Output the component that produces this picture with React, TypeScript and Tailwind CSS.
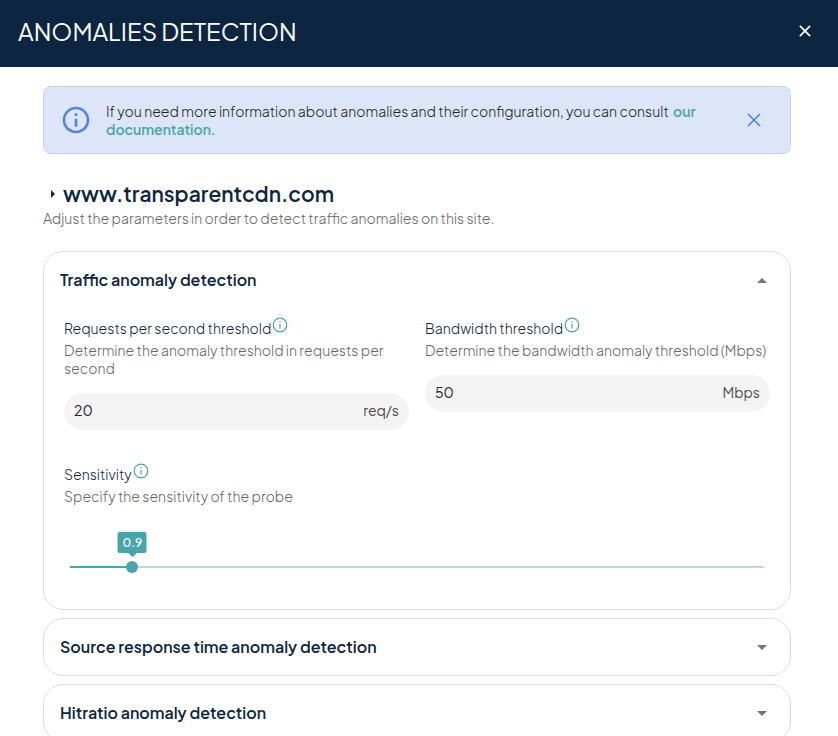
import { useId, useState } from "react";
import type { ReactNode } from "react";

function InfoIcon({ className }: { className: string }) {
  return (
    <svg viewBox="0 0 24 24" className={className} fill="currentColor" aria-hidden="true">
      <path d="M11 7h2v2h-2zm0 4h2v6h-2zm1-9C6.48 2 2 6.48 2 12s4.48 10 10 10 10-4.48 10-10S17.52 2 12 2m0 18c-4.41 0-8-3.59-8-8s3.59-8 8-8 8 3.59 8 8-3.59 8-8 8" />
    </svg>
  );
}

function ThinInfoIcon() {
  return (
    <svg viewBox="0 0 16 16" className="mb-1 ml-px size-4 shrink-0 text-[#4aa5aa]" fill="none" stroke="currentColor" aria-hidden="true">
      <circle cx="8" cy="8" r="6.8" strokeWidth="1.2" />
      <path d="M8 7v4.5M8 4.3v1.3" strokeWidth="1.2" />
    </svg>
  );
}

function CloseIcon({ className }: { className: string }) {
  return (
    <svg viewBox="0 0 14 14" className={className} fill="none" stroke="currentColor" aria-hidden="true">
      <path d="M1 1l12 12M13 1L1 13" />
    </svg>
  );
}

function FieldLabel({ id, label, hint }: { id: string; label: string; hint: string }) {
  return (
    <>
      <label htmlFor={id} className="flex h-6 items-end text-sm leading-[18px] font-light text-[#0c2541]">
        {label}
        <ThinInfoIcon />
      </label>
      <p className="mt-1 text-sm leading-[18px] font-light text-[#666]">{hint}</p>
    </>
  );
}

function ThresholdField({ label, hint, unit, initial }: { label: string; hint: string; unit: string; initial: string }) {
  const id = useId();
  const [value, setValue] = useState(initial);
  return (
    <div>
      <FieldLabel id={id} label={label} hint={hint} />
      <div className="mt-4 flex h-[37px] items-center rounded-full bg-[#f4f4f4] px-2.5 pb-1 text-sm">
        <input
          id={id}
          value={value}
          onChange={(e) => setValue(e.target.value)}
          className="min-w-0 flex-1 bg-transparent text-[#222] outline-none"
        />
        <span className="text-[#4c4c4c]">{unit}</span>
      </div>
    </div>
  );
}

function SensitivitySlider() {
  const id = useId();
  const [value, setValue] = useState(0.9);
  const percent = `${value * 10}%`;
  return (
    <div className="mt-[29px]">
      <FieldLabel id={id} label="Sensitivity" hint="Specify the sensitivity of the probe" />
      <div className="relative mt-14 flex h-3 items-center px-1.5">
        <div className="relative h-0.5 w-full bg-[#b7dadc]">
          <div className="h-full bg-[#4aa5aa]" style={{ width: percent }} />
          <output
            htmlFor={id}
            style={{ left: percent }}
            className="absolute bottom-[15px] flex h-[21px] w-[29px] -translate-x-1/2 items-center justify-center rounded-xs bg-[#4aa5aa] text-xs font-medium text-white after:absolute after:-bottom-[3px] after:size-1.5 after:rotate-45 after:bg-[#4aa5aa]"
          >
            <span className="relative z-10">{value}</span>
          </output>
        </div>
        <input
          id={id}
          type="range"
          min={0}
          max={10}
          step={0.1}
          value={value}
          onChange={(e) => setValue(Number(e.target.value))}
          className="absolute inset-0 h-3 w-full cursor-pointer appearance-none bg-transparent [&::-webkit-slider-thumb]:size-3 [&::-webkit-slider-thumb]:appearance-none [&::-webkit-slider-thumb]:rounded-full [&::-webkit-slider-thumb]:bg-[#4aa5aa]"
        />
      </div>
    </div>
  );
}

function Panel({ title, initiallyOpen = false, children }: { title: string; initiallyOpen?: boolean; children?: ReactNode }) {
  const [open, setOpen] = useState(initiallyOpen);
  return (
    <section className="rounded-[20px] border border-[#dedede]">
      <h3>
        <button
          type="button"
          aria-expanded={open}
          onClick={() => setOpen(!open)}
          className="flex h-14 w-full items-center justify-between px-4 text-left text-base font-semibold text-[#0c2541]"
        >
          {title}
          <svg viewBox="0 0 10 5" className="mr-[7px] h-[5px] w-2.5 text-[#757575]" fill="currentColor" aria-hidden="true">
            <path d={open ? "M0 5L5 0l5 5z" : "M0 0h10L5 5z"} />
          </svg>
        </button>
      </h3>
      {open && children}
    </section>
  );
}

export default function App() {
  const [notice, setNotice] = useState(true);
  return (
    <div className="h-screen overflow-hidden bg-white font-['Plus_Jakarta_Sans','Inter',sans-serif]">
      <header className="flex h-[67px] items-center justify-between bg-[#0c2541] pr-[27px] pb-1.5 pl-[18px] text-white">
        <h1 className="text-2xl font-normal">ANOMALIES DETECTION</h1>
        <button type="button" aria-label="Close">
          <CloseIcon className="size-3 stroke-2" />
        </button>
      </header>
      <main className="pt-[19px] pr-[47px] pl-[43px]">
        {notice && (
          <div role="status" className="flex h-[68px] items-center rounded-lg border border-[#bfd3f4] bg-[#dce6f8] pr-[29px] pl-4">
            <InfoIcon className="size-8 shrink-0 text-[#5384e4]" />
            <p className="mr-12 ml-3.5 flex-1 text-sm leading-[18px] font-light text-[#222]">
              If you need more information about anomalies and their configuration, you can consult{" "}
              <a href="#documentation" className="ml-0.5 font-semibold text-[#4fa3a8]">
                our documentation.
              </a>
            </p>
            <button type="button" aria-label="Dismiss" onClick={() => setNotice(false)} className="text-[#5384e4]">
              <CloseIcon className="size-3.5 stroke-[1.7]" />
            </button>
          </div>
        )}
        <h2 className="mt-[26px] flex items-center gap-2 pl-2 text-[21px] leading-7 font-semibold text-[#0c2541]">
          <svg viewBox="0 0 4 8" className="h-2 w-1" fill="currentColor" aria-hidden="true">
            <path d="M0 0l4 4-4 4z" />
          </svg>
          www.transparentcdn.com
        </h2>
        <p className="mt-px text-sm leading-[18px] font-light text-[#666]">
          Adjust the parameters in order to detect traffic anomalies on this site.
        </p>
        <div className="mt-6 flex flex-col gap-2">
          <Panel title="Traffic anomaly detection" initiallyOpen>
            <div className="px-5 pt-[5px] pb-9">
              <div className="grid grid-cols-2 items-start gap-4">
                <ThresholdField
                  label="Requests per second threshold"
                  hint="Determine the anomaly threshold in requests per second"
                  unit="req/s"
                  initial="20"
                />
                <ThresholdField
                  label="Bandwidth threshold"
                  hint="Determine the bandwidth anomaly threshold (Mbps)"
                  unit="Mbps"
                  initial="50"
                />
              </div>
              <SensitivitySlider />
            </div>
          </Panel>
          <Panel title="Source response time anomaly detection" />
          <Panel title="Hitratio anomaly detection" />
        </div>
      </main>
    </div>
  );
}
